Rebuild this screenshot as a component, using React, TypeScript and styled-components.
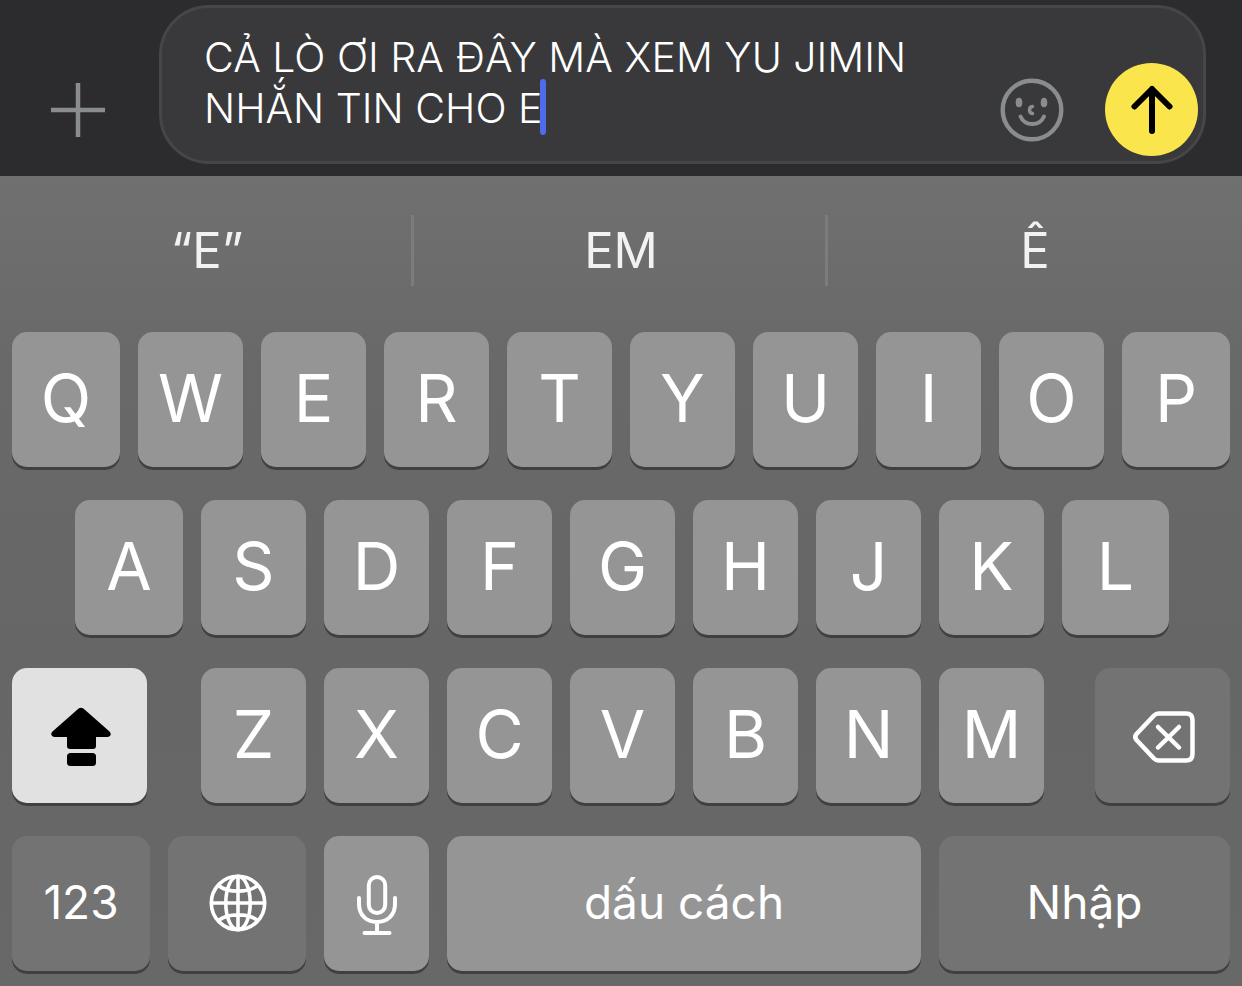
import React, { useLayoutEffect, useRef, useState } from "react";
import styled, { createGlobalStyle } from "styled-components";

const FONT = 'Inter, "Liberation Sans", sans-serif';

const GlobalStyle = createGlobalStyle`
  *, *::before, *::after { box-sizing: border-box; }
  html, body { margin: 0; background: #686868; }
  body, button, textarea { font-family: ${FONT}; }
`;

const Screen = styled.main`
  display: flex;
  flex-direction: column;
  min-height: 100vh;
`;

const Composer = styled.form`
  display: flex;
  align-items: stretch;
  padding: 5px 36px 12px 0;
  background: #2c2c2e;
`;

const IconButton = styled.button`
  display: flex;
  align-items: center;
  justify-content: center;
  flex: none;
  padding: 0;
  border: 0;
  background: none;
  color: #8a8d90;
  cursor: pointer;
`;

const AttachButton = styled(IconButton)`
  width: 159px;
  padding: 50px 4px 0 0;
`;

const Field = styled.div`
  display: flex;
  align-items: flex-end;
  flex: 1;
  min-width: 0;
  padding: 24px 5px 5px 42px;
  border: 3px solid #464648;
  border-radius: 50px;
  background: #39393b;
`;

const TextWrap = styled.div`
  position: relative;
  align-self: flex-start;
  flex: 1;
  min-width: 0;
  height: 124px;
`;

const MessageBox = styled.textarea`
  display: block;
  width: 100%;
  height: 102px;
  padding: 0;
  border: 0;
  outline: 0;
  resize: none;
  overflow: hidden;
  background: none;
  color: #fff;
  caret-color: transparent;
  font-size: 41px;
  font-weight: 360;
  line-height: 51px;
`;

const Caret = styled.span`
  position: absolute;
  width: 6px;
  height: 56px;
  border-radius: 3px;
  background: #4c6cec;
  pointer-events: none;
`;

const EmojiButton = styled(IconButton)`
  width: 64px;
  height: 93px;
  margin-right: 41px;
`;

const SendButton = styled(IconButton)`
  width: 93px;
  height: 93px;
  border-radius: 50%;
  background: #fae54d;
  color: #000;
`;

const Keyboard = styled.section`
  display: flex;
  flex-direction: column;
  flex: 1;
  background: linear-gradient(#707070, #696969 180px, #666 500px, #686868);
`;

const Suggestions = styled.div`
  display: grid;
  grid-template-columns: repeat(3, 1fr);
  padding: 39px 0 46px;
`;

const Suggestion = styled.button`
  height: 71px;
  padding: 0 0 0 3px;
  border: 0;
  border-right: 3px solid #7c7c7c;
  background: none;
  color: #f2f2f2;
  font-size: 49px;
  line-height: 71px;
  cursor: pointer;

  &:last-child { border-color: transparent; }
`;

const Keys = styled.div`
  display: flex;
  flex-direction: column;
  gap: 33px;
  padding: 0 12px 15px;
`;

const KeyRow = styled.div`
  display: flex;
  gap: 18px;
`;

const Spacer = styled.span<{ $span: number }>`
  flex: ${(p) => p.$span} 1 0;
`;

type Tone = "light" | "dark" | "active";

const tones: Record<Tone, string> = {
  light: "#959595",
  dark: "#737373",
  active: "#e1e1e1",
};

const Key = styled.button<{ $span?: number; $tone?: Tone; $label?: boolean }>`
  display: flex;
  align-items: center;
  justify-content: center;
  flex: ${(p) => p.$span ?? 105} 1 0;
  min-width: 0;
  height: 135px;
  padding: 0 0 4px;
  border: 0;
  border-radius: 15px;
  background: ${(p) => tones[p.$tone ?? "light"]};
  box-shadow: 0 3px 0 #404040;
  color: ${(p) => (p.$tone === "active" ? "#000" : "#fff")};
  font-size: ${(p) => (p.$label ? 46 : 66)}px;
  line-height: 1;
  cursor: pointer;
`;

const IconKey = styled(Key)`
  padding: 2px 0 0;
`;

const PlusIcon = () => (
  <svg width="54" height="54" viewBox="0 0 54 54" stroke="currentColor" strokeWidth="4.5" aria-hidden="true">
    <path d="M27 0v54M0 27h54" />
  </svg>
);

const SmileIcon = () => (
  <svg width="64" height="64" viewBox="0 0 64 64" fill="none" stroke="currentColor" strokeWidth="4" strokeLinecap="round" aria-hidden="true">
    <circle cx="32" cy="32" r="29.3" strokeWidth="4.4" />
    <ellipse cx="19" cy="24.5" rx="3.3" ry="4.8" fill="currentColor" stroke="none" />
    <ellipse cx="44" cy="24.5" rx="3.3" ry="4.8" fill="currentColor" stroke="none" />
    <path d="M32.5 28.5c-4 .5-4 6.5 0 7" strokeWidth="3.5" />
    <path d="M20.5 38.5c4.5 10 19 10 23.5 0" />
  </svg>
);

const ArrowUpIcon = () => (
  <svg width="48" height="52" viewBox="0 0 48 52" fill="none" stroke="currentColor" strokeWidth="6" strokeLinecap="round" strokeLinejoin="round" aria-hidden="true">
    <path d="M24 47V5M6.5 22.5 24 5l17.5 17.5" />
  </svg>
);

const CapsIcon = () => (
  <svg width="63" height="60" viewBox="-3 0 63 60" fill="currentColor" aria-hidden="true">
    <path d="M27.6 1.6Q30 0 32.4 1.6L58.5 24.5Q60.5 26.5 59.3 28.6Q58.5 30 56.5 30H45V39Q45 42 42 42H19Q16 42 16 39V30H3.5Q1.5 30 .7 28.6Q-.5 26.5 1.5 24.5Z" />
    <rect x="16" y="46" width="29" height="13" rx="3.5" />
  </svg>
);

const BackspaceIcon = () => (
  <svg width="66" height="54" viewBox="-2 0 66 54" fill="none" stroke="currentColor" strokeWidth="4.5" strokeLinecap="round" strokeLinejoin="round" aria-hidden="true">
    <path d="M26.5 3.5H54Q60.5 3.5 60.5 10V44Q60.5 50.5 54 50.5H26.5Q24 50.5 22 48.5L4.5 30Q2 27 4.5 24L22 5.5Q24 3.5 26.5 3.5Z" />
    <path d="M26 17 47 37.5M47 17 26 37.5" />
  </svg>
);

const GlobeIcon = () => (
  <svg width="60" height="62" viewBox="-2 0 60 62" fill="none" stroke="currentColor" strokeWidth="3.6" aria-hidden="true">
    <circle cx="29" cy="29" r="26.7" />
    <ellipse cx="29" cy="29" rx="12.2" ry="26.7" />
    <path d="M29 2v54M2 29h54M9.5 11.5c9 7.5 30 7.5 39 0M9.5 46.5c9-7.5 30-7.5 39 0" />
  </svg>
);

const MicIcon = () => (
  <svg width="42" height="62" viewBox="0 0 42 62" fill="none" stroke="currentColor" strokeWidth="4" strokeLinecap="round" aria-hidden="true">
    <rect x="12.8" y="3" width="16.4" height="36" rx="8.2" />
    <path d="M3 24v6c0 11 7.5 18 18 18s18-7 18-18v-6M21 48v10.5M8.5 59h25" />
  </svg>
);

const CARET_LINE = 51;

export default function App() {
  const [message, setMessage] = useState("CẢ LÒ ƠI RA ĐÂY MÀ XEM YU JIMIN\nNHẮN TIN CHO E");
  const [caret, setCaret] = useState({ left: 0, top: 0 });
  const box = useRef<HTMLTextAreaElement>(null);

  // Keeps the drawn caret at the end of the last line.
  useLayoutEffect(() => {
    const ctx = document.createElement("canvas").getContext("2d");
    if (!ctx || !box.current) return;
    ctx.font = getComputedStyle(box.current).font;
    const lines = message.split("\n");
    setCaret({
      left: Math.round(ctx.measureText(lines[lines.length - 1]).width) - 2,
      top: (lines.length - 1) * CARET_LINE - 4,
    });
  }, [message]);

  const type = (text: string) => setMessage((m) => m + text);
  const letters = (row: string, first = 105, last = 105) =>
    [...row].map((c, i) => (
      <Key key={c} type="button" $span={i === 0 ? first : i === row.length - 1 ? last : 105} onClick={() => type(c)}>
        {c}
      </Key>
    ));

  return (
    <Screen>
      <GlobalStyle />
      <Composer onSubmit={(e) => e.preventDefault()}>
        <AttachButton type="button" aria-label="Thêm">
          <PlusIcon />
        </AttachButton>
        <Field>
          <TextWrap>
            <MessageBox
              ref={box}
              aria-label="Tin nhắn"
              spellCheck={false}
              value={message}
              onChange={(e) => setMessage(e.target.value)}
            />
            <Caret style={caret} />
          </TextWrap>
          <EmojiButton type="button" aria-label="Biểu tượng cảm xúc">
            <SmileIcon />
          </EmojiButton>
          <SendButton type="submit" aria-label="Gửi">
            <ArrowUpIcon />
          </SendButton>
        </Field>
      </Composer>

      <Keyboard aria-label="Bàn phím">
        <Suggestions>
          {["“E”", "EM", "Ê"].map((s) => (
            <Suggestion key={s} type="button">{s}</Suggestion>
          ))}
        </Suggestions>
        <Keys>
          <KeyRow>{letters("QWERTYUIOP", 108, 108)}</KeyRow>
          <KeyRow>
            <Spacer $span={45} />
            {letters("ASDFGHJKL", 108, 107)}
            <Spacer $span={43} />
          </KeyRow>
          <KeyRow>
            <IconKey type="button" $span={135} $tone="active" aria-label="Viết hoa">
              <CapsIcon />
            </IconKey>
            <Spacer $span={18} />
            {letters("ZXCVBNM")}
            <Spacer $span={15} />
            <IconKey type="button" $span={135} $tone="dark" aria-label="Xóa" onClick={() => setMessage((m) => m.slice(0, -1))}>
              <BackspaceIcon />
            </IconKey>
          </KeyRow>
          <KeyRow>
            <Key type="button" $span={138} $tone="dark" $label>123</Key>
            <IconKey type="button" $span={138} $tone="dark" aria-label="Ngôn ngữ">
              <GlobeIcon />
            </IconKey>
            <IconKey type="button" aria-label="Đọc chính tả">
              <MicIcon />
            </IconKey>
            <Key type="button" $span={474} $label onClick={() => type(" ")}>dấu cách</Key>
            <Key type="button" $span={291} $tone="dark" $label onClick={() => type("\n")}>Nhập</Key>
          </KeyRow>
        </Keys>
      </Keyboard>
    </Screen>
  );
}
